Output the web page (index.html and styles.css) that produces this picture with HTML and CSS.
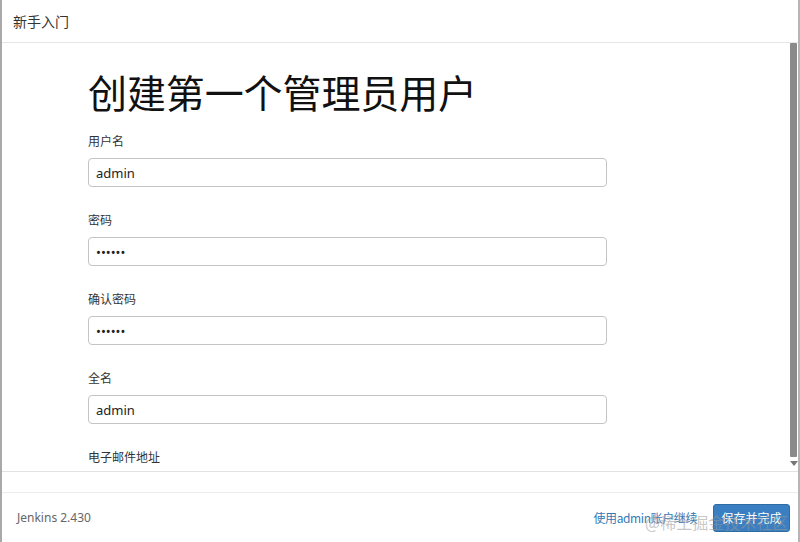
FILE: index.html
```html
<!DOCTYPE html>
<html lang="zh-CN">
<head>
<meta charset="utf-8">
<title>新手入门</title>
<link rel="stylesheet" href="styles.css">
</head>
<body>
<div class="dialog">
  <header class="dialog-header">新手入门</header>
  <div class="dialog-body">
    <div class="scroll-content">
      <div class="form">
        <h1 class="title">创建第一个管理员用户</h1>
        <div class="field">
          <label class="label">用户名</label>
          <input class="input" type="text" value="admin">
        </div>
        <div class="field">
          <label class="label">密码</label>
          <input class="input" type="password" value="123456">
        </div>
        <div class="field">
          <label class="label">确认密码</label>
          <input class="input" type="password" value="123456">
        </div>
        <div class="field">
          <label class="label">全名</label>
          <input class="input" type="text" value="admin">
        </div>
        <div class="field">
          <label class="label">电子邮件地址</label>
          <input class="input" type="text" value="">
        </div>
      </div>
    </div>
    <div class="scrollbar">
      <div class="scrollbar-thumb"></div>
      <div class="scrollbar-arrow"></div>
    </div>
  </div>
  <div class="spacer"></div>
  <footer class="dialog-footer">
    <span class="version">Jenkins 2.430</span>
    <div class="actions">
      <a class="link" href="#">使用admin账户继续</a>
      <button class="btn-primary" type="button">保存并完成</button>
    </div>
  </footer>
  <div class="watermark">@稀土掘金技术社区</div>
</div>
</body>
</html>
```

FILE: styles.css
```css
* { box-sizing: border-box; }
html, body { margin: 0; padding: 0; background: #fff; }
body {
  font-family: "Noto Sans", "Noto Sans CJK SC", sans-serif;
  color: #222;
  width: 800px;
  height: 542px;
  overflow: hidden;
}
.dialog {
  position: relative;
  height: 542px;
  display: flex;
  flex-direction: column;
  border-left: 2px solid #a9a9a9;
  border-right: 2px solid #b5b5b5;
}
.dialog-header {
  height: 43px;
  flex: none;
  display: flex;
  align-items: center;
  padding-left: 11px;
  padding-bottom: 1px;
  font-size: 14px;
  color: #333;
  border-bottom: 1px solid #e6e6e6;
  font-family: "Noto Sans CJK SC", sans-serif;
}
.dialog-body {
  height: 429px;
  flex: none;
  display: flex;
  border-bottom: 1px solid #e2e2e2;
}
.scroll-content {
  flex: 1;
  overflow: hidden;
}
.scrollbar {
  width: 9px;
  flex: none;
  display: flex;
  flex-direction: column;
  align-items: center;
  padding: 0 1px 0 1px;
}
.scrollbar-thumb {
  width: 7px;
  height: 414px;
  background: #8a8a8a;
  border-radius: 1px;
}
.scrollbar-arrow {
  margin-top: 4px;
  width: 0;
  height: 0;
  border-left: 4px solid transparent;
  border-right: 4px solid transparent;
  border-top: 5px solid #777;
}
.form {
  padding: 25px 0 2px 86px;
  width: 605px;
}
.title {
  margin: 0 0 18px;
  font-family: "Noto Sans CJK SC", sans-serif;
  font-weight: 400;
  font-size: 39px;
  line-height: 46px;
  letter-spacing: -0.1px;
  color: #111;
}
.field { display: flex; flex-direction: column; margin-bottom: 24px; }
.label {
  font-family: "Noto Sans CJK SC", sans-serif;
  font-size: 12px;
  line-height: 18px;
  margin-bottom: 8px;
  color: #333;
}
.input {
  width: 519px;
  height: 29px;
  border: 1px solid #c4c4c4;
  border-radius: 4px;
  padding: 0 7px;
  font-family: "Noto Sans", sans-serif;
  font-size: 13px;
  color: #222;
  background: #fff;
  outline: none;
}
.spacer { height: 20px; flex: none; }
.dialog-footer {
  flex: 1;
  border-top: 1px solid #ececec;
  display: flex;
  align-items: center;
  justify-content: space-between;
  padding: 0 8px 0 15px;
}
.version {
  font-size: 12px;
  color: #666;
}
.actions { display: flex; align-items: center; gap: 16px; }
.link {
  font-family: "Noto Sans CJK SC", sans-serif;
  font-size: 12px;
  letter-spacing: -0.4px;
  color: #337ab7;
  text-decoration: none;
}
.btn-primary {
  height: 28px;
  width: 77px;
  padding: 0;
  border: 1px solid #2e6da4;
  border-radius: 3px;
  background: #3a7fc1;
  color: #fff;
  font-family: "Noto Sans CJK SC", sans-serif;
  font-size: 12px;
}
.watermark {
  position: absolute;
  left: 643px;
  top: 511px;
  font-family: "Noto Sans CJK SC", sans-serif;
  font-size: 16px;
  line-height: 22px;
  color: rgba(150, 150, 150, 0.55);
  pointer-events: none;
}
```
